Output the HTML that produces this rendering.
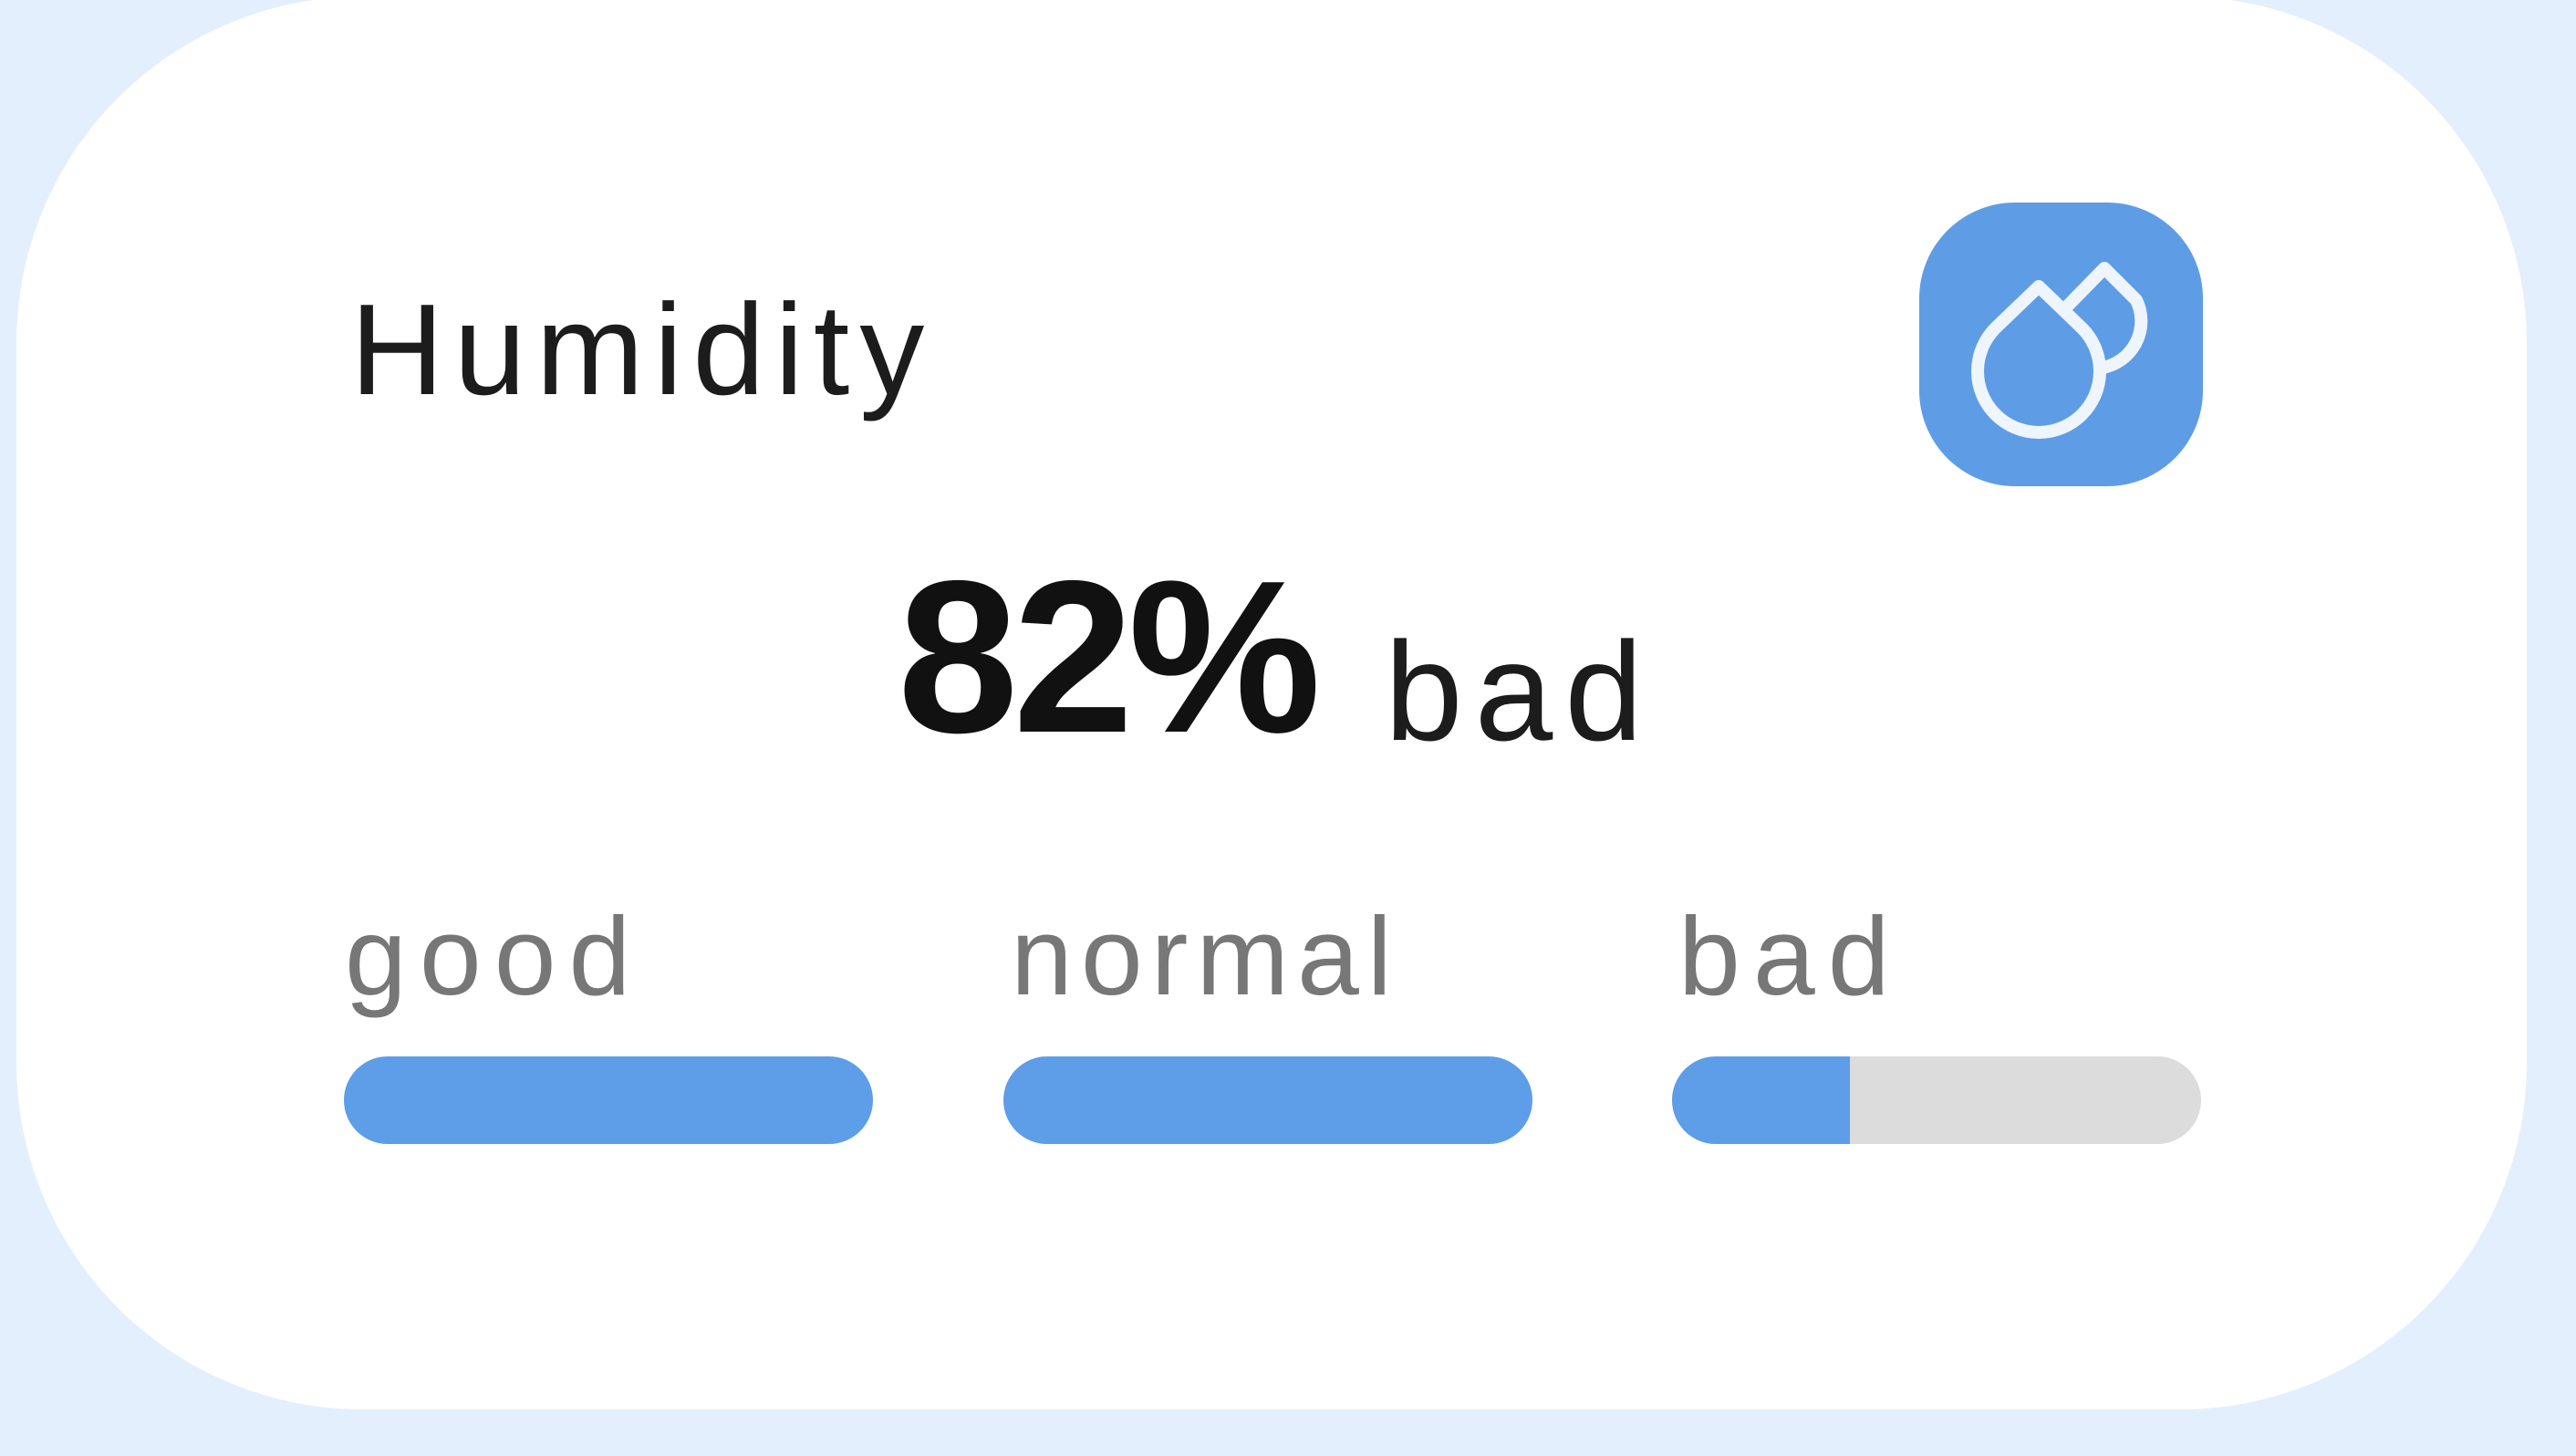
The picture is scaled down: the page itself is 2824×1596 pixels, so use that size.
<!DOCTYPE html>
<html><head><meta charset="utf-8"><style>
html,body{margin:0;padding:0;width:2824px;height:1596px;background:#e3effc;overflow:hidden;font-family:"Liberation Sans",sans-serif}
.card{position:absolute;left:18px;top:-4px;width:2752px;height:1549px;background:#fff;border-radius:380px}
.t{position:absolute;white-space:nowrap}
.bar{position:absolute;top:1158px;height:96px;width:580px;border-radius:48px;background:#5e9de8;overflow:hidden}
</style></head><body>
<div class="card"></div>
<div class="t" style="left:384px;top:302px;font-size:142px;color:#1c1c1c;letter-spacing:11px">Humidity</div>
<svg style="position:absolute;left:2102px;top:220px" width="315" height="315" viewBox="0 0 315 315">
<rect x="2" y="2" width="311" height="311" rx="105" fill="#5e9de6"/>
<g fill="none" stroke="#eef5fd" stroke-width="14" stroke-linejoin="round">
<path d="M162 118 L205 74 L240 109 A52 52 0 0 1 203 183"/>
<path d="M133 94 L85.6 139.6 A67 67 0 1 0 180.4 139.6 Z"/>
</g></svg>
<div class="t" style="left:984px;top:584px;font-size:238px;font-weight:bold;color:#111;letter-spacing:-6px">82%</div>
<div class="t" style="left:1518px;top:670px;font-size:154px;color:#1c1c1c;letter-spacing:13px">bad</div>
<div class="t" style="left:378px;top:978px;font-size:122px;color:#777;letter-spacing:14px">good</div>
<div class="t" style="left:1108px;top:978px;font-size:122px;color:#777;letter-spacing:9px">normal</div>
<div class="t" style="left:1840px;top:978px;font-size:122px;color:#777;letter-spacing:14px">bad</div>
<div class="bar" style="left:377px"></div>
<div class="bar" style="left:1100px"></div>
<div class="bar" style="left:1833px;background:#dcdcdc"><div style="width:195px;height:100%;background:#5e9de8"></div></div>
</body></html>
